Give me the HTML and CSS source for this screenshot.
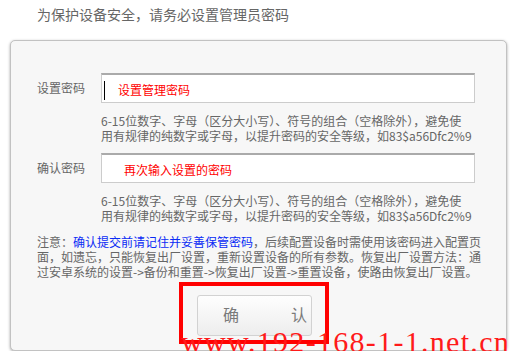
FILE: index.html
```html
<!DOCTYPE html>
<html lang="zh-CN">

<head>
    <meta charset="UTF-8">
    <meta name="viewport" content="width=device-width, initial-scale=1.0">
    <title>设置管理员密码</title>
    <link rel="stylesheet" href="styles.css">
</head>

<body>
    <p class="page-title">为保护设备安全，请务必设置管理员密码</p>

    <div class="panel">
        <div class="form-row">
            <span class="form-label">设置密码</span>
            <div class="pwd-field">
                <span class="caret"></span>
                <span class="pwd-hint pwd-hint-first">设置管理密码</span>
            </div>
        </div>
        <p class="rule-tip">6-15位数字、字母（区分大小写）、符号的组合（空格除外），避免使<br>用有规律的纯数字或字母，以提升密码的安全等级，如83$a56Dfc2%9</p>

        <div class="form-row">
            <span class="form-label">确认密码</span>
            <div class="pwd-field">
                <span class="pwd-hint pwd-hint-second">再次输入设置的密码</span>
            </div>
        </div>
        <p class="rule-tip">6-15位数字、字母（区分大小写）、符号的组合（空格除外），避免使<br>用有规律的纯数字或字母，以提升密码的安全等级，如83$a56Dfc2%9</p>

        <p class="notice">注意：<span class="notice-key">确认提交前请记住并妥善保管密码</span>，后续配置设备时需使用该密码进入配置页面，如遗忘，只能恢复出厂设置，重新设置设备的所有参数。恢复出厂设置方法：通过安卓系统的设置-&gt;备份和重置-&gt;恢复出厂设置-&gt;重置设备，使路由恢复出厂设置。</p>

        <button type="button" class="confirm-btn"><span>确</span><span>认</span></button>

        <!-- annotation drawn over the screenshot -->
        <div class="mark-box"></div>
        <div class="watermark">www.192-168-1-1.net.cn</div>
    </div>
</body>

</html>
```

FILE: styles.css
```css
html,
body {
    overflow: hidden;
}

body {
    margin: 0;
    padding: 0;
    background-color: #ffffff;
    font-family: "Noto Sans CJK SC", "Liberation Sans", sans-serif;
    font-size: 12px;
    color: #666666;
    /* Gray text */
}

.page-title {
    margin: 0;
    padding: 4px 0 0 37px;
    font-size: 14px;
    line-height: 20px;
}

.panel {
    position: relative;
    box-sizing: border-box;
    width: 497px;
    margin: 16px 0 0 10px;
    padding: 32px 0 14px 26px;
    background-color: #f7f7f7;
    /* Light Gray */
    border: 1px solid #c2c2c2;
    border-radius: 5px;
    box-shadow: 0 1px 3px rgba(0, 0, 0, 0.35);
}

.form-row {
    display: flex;
    align-items: center;
    height: 30px;
}

.form-label {
    width: 64px;
    line-height: 30px;
}

.pwd-field {
    box-sizing: border-box;
    display: flex;
    align-items: center;
    width: 374px;
    height: 30px;
    background-color: #ffffff;
    border: 1px solid #cccccc;
    border-top: 2px solid #aaaaaa;
}

.caret {
    width: 1px;
    height: 19px;
    margin: 3px 0 0 2px;
    background-color: #000000;
}

.pwd-hint {
    color: #ff0000;
    /* Red */
    line-height: 14px;
    padding-top: 3px;
}

.pwd-hint-first {
    margin-left: 13px;
}

.pwd-hint-second {
    margin-left: 22px;
}

.rule-tip {
    width: 374px;
    margin: 10px 0 10px 64px;
    line-height: 15px;
    white-space: nowrap;
}

.notice {
    width: 448px;
    margin: 11px 0 0;
    line-height: 15px;
}

.notice-key {
    color: #0a2bf5;
    /* Blue */
}

.confirm-btn {
    display: flex;
    justify-content: space-between;
    align-items: center;
    box-sizing: border-box;
    width: 115px;
    height: 41px;
    margin: 16px 0 0 160px;
    padding: 0 4px 4px 25px;
    font-family: inherit;
    font-size: 16px;
    color: #7a7a7a;
    background: linear-gradient(#fefefe, #ededed);
    border: 1px solid #d2d2d2;
    border-radius: 3px;
    cursor: pointer;
}

.mark-box {
    position: absolute;
    left: 168px;
    top: 241px;
    box-sizing: border-box;
    width: 150px;
    height: 62px;
    border: 4px solid #ff0000;
}

.watermark {
    position: absolute;
    left: 170px;
    top: 286px;
    font-family: "Liberation Serif", serif;
    font-size: 30px;
    line-height: 30px;
    letter-spacing: 1.3px;
    color: #ff1a1a;
    white-space: nowrap;
}
```
